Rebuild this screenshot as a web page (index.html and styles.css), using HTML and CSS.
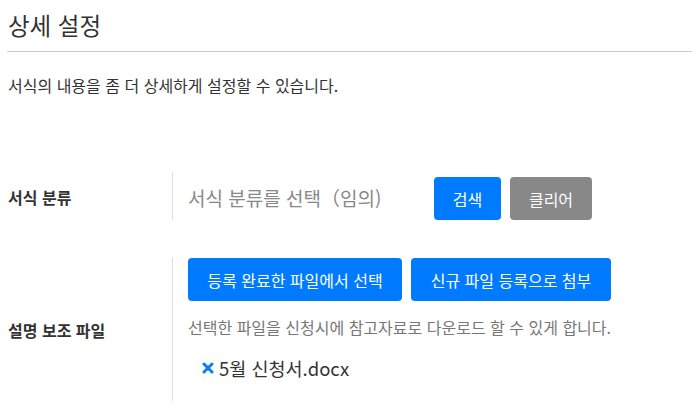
FILE: index.html
```html
<!DOCTYPE html>
<html lang="ko">
<head>
<meta charset="utf-8">
<link rel="stylesheet" href="styles.css">
</head>
<body>
<div class="page">
  <h1 class="title">상세 설정</h1>
  <p class="desc">서식의 내용을 좀 더 상세하게 설정할 수 있습니다.</p>
  <div class="form">
    <div class="row row-cat">
      <div class="label">서식 분류</div>
      <div class="field">
        <span class="placeholder">서식 분류를 선택（임의)</span>
        <button class="btn btn-primary btn-search">검색</button>
        <button class="btn btn-gray">클리어</button>
      </div>
    </div>
    <div class="row row-file">
      <div class="label">설명 보조 파일</div>
      <div class="field field-col">
        <div class="btns">
          <button class="btn btn-primary btn-wide1">등록 완료한 파일에서 선택</button>
          <button class="btn btn-primary btn-wide2">신규 파일 등록으로 첨부</button>
        </div>
        <p class="help">선택한 파일을 신청시에 참고자료로 다운로드 할 수 있게 합니다.</p>
        <div class="file">
          <svg class="x" width="12" height="12" viewBox="0 0 12 12"><path d="M2 2 L10 10 M10 2 L2 10" stroke="#0d7cf2" stroke-width="3" stroke-linecap="round"/></svg>
          <span class="fname">5월 신청서.docx</span>
        </div>
      </div>
    </div>
  </div>
</div>
</body>
</html>
```
FILE: styles.css
```css
* { box-sizing: border-box; }
html, body { margin: 0; padding: 0; background: #fff; }
body {
  font-family: "Noto Sans CJK KR", "Noto Sans", sans-serif;
  color: #333;
}
.page { padding: 8px 0 0 8px; }
.title {
  margin: 0 0 0 -1px;
  padding: 0 0 9px 1px;
  font-size: 23.5px;
  font-weight: 400;
  line-height: 34px;
  color: #333;
  border-bottom: 1px solid #ccc;
}
.desc {
  margin: 21px 0 0 0;
  font-size: 16px;
  line-height: 24px;
  color: #333;
}
.form { margin-top: 75px; }
.row {
  display: grid;
  grid-template-columns: 164px 1fr;
}
.label {
  display: flex;
  align-items: center;
  font-size: 16px;
  font-weight: 700;
  color: #333;
}
.row-cat .label { padding-top: 1px; }
.field {
  border-left: 1px solid #ddd;
  padding-left: 15px;
}
.row-cat .field {
  display: flex;
  align-items: center;
  height: 48px;
  padding-top: 5px;
}
.placeholder {
  width: 246px;
  font-size: 19px;
  color: #888;
  margin-top: -3px;
}
.btn {
  border: none;
  border-radius: 4px;
  height: 43px;
  font-family: inherit;
  font-size: 16px;
  color: #fff;
  padding: 0;
  cursor: pointer;
}
.btn-primary { background: #007bff; }
.btn-gray { background: #888; width: 82px; margin-left: 9px; }
.btn-search { width: 67px; }
.row-file { margin-top: 38px; }
.field-col { padding-bottom: 20px; }
.btns { display: flex; gap: 9px; }
.btn-wide1 { width: 214px; }
.btn-wide2 { width: 200px; }
.help {
  margin: 14px 0 0 0;
  font-size: 16px;
  line-height: 24px;
  color: #777;
}
.file {
  display: flex;
  align-items: center;
  gap: 5px;
  margin-top: 16px;
  padding-left: 14px;
}
.fname { font-size: 18.5px; color: #333; line-height: 26px; }
```
